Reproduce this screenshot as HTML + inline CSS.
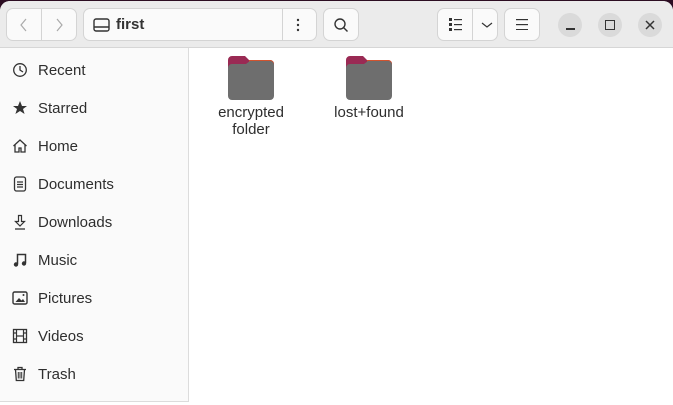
<!DOCTYPE html>
<html><head><meta charset="utf-8"><style>
*{margin:0;padding:0;box-sizing:border-box}
body{width:673px;height:405px;background:#2c0d22;font-family:"Liberation Sans","DejaVu Sans",sans-serif;position:relative;overflow:hidden}
.win{position:absolute;left:0;top:1px;width:673px;height:404px;background:#fff;border-radius:10px 10px 0 0;overflow:hidden}
.hdr{position:absolute;left:0;top:0;width:673px;height:47px;background:#ebebeb;border-bottom:1px solid #d6d6d6}
.btn{position:absolute;top:7px;height:33px;background:#fafafa;border:1px solid #d4d4d4;border-radius:7px}
.side{position:absolute;left:0;top:47px;width:189px;height:354px;background:#fafafa;border-right:1px solid #dcdcdc;border-bottom:1px solid #dcdcdc}
.item{position:absolute;left:12px;height:20px;font-size:15px;color:#2e2e2e;line-height:20px}
.item svg{position:absolute;left:0;top:2px}
.item span{position:absolute;left:26px;top:1px;white-space:nowrap}
.circ{position:absolute;top:12px;width:24px;height:24px;border-radius:50%;background:#dadada}
.lbl{position:absolute;font-size:15px;color:#2e2e2e;text-align:center;line-height:17px}
</style></head><body>
<div class="win">
<div class="hdr">
 <div class="btn" style="left:6px;width:71px"><div style="position:absolute;left:34px;top:0;width:1px;height:31px;background:#d4d4d4"></div>
  <svg style="position:absolute;left:12px;top:8px" width="10" height="16"><path d="M7 2L2 8l5 6" stroke="#aaa" fill="none" stroke-width="1.2"/></svg>
  <svg style="position:absolute;left:47px;top:8px" width="10" height="16"><path d="M3 2l5 6-5 6" stroke="#aaa" fill="none" stroke-width="1.2"/></svg></div>
 <div class="btn" style="left:83px;width:234px"><div style="position:absolute;left:198px;top:0;width:1px;height:31px;background:#d4d4d4"></div>
  <svg style="position:absolute;left:9px;top:9px" width="18" height="15"><rect x="1" y="1" width="15" height="12" rx="2" fill="none" stroke="#333" stroke-width="1.4"/><line x1="1" y1="9" x2="16" y2="9" stroke="#333" stroke-width="1.4"/></svg>
  <span style="position:absolute;left:32px;top:7px;font-size:15px;font-weight:bold;color:#333">first</span>
  <svg style="position:absolute;left:212px;top:9px" width="4" height="14"><circle cx="2" cy="2" r="1.2" fill="#333"/><circle cx="2" cy="7" r="1.2" fill="#333"/><circle cx="2" cy="12" r="1.2" fill="#333"/></svg></div>
 <div class="btn" style="left:323px;width:36px"><svg style="position:absolute;left:9px;top:8px" width="16" height="16"><circle cx="7" cy="7" r="5" fill="none" stroke="#333" stroke-width="1.4"/><line x1="10.5" y1="10.5" x2="14.5" y2="14.5" stroke="#333" stroke-width="1.4"/></svg></div>
 <div class="btn" style="left:437px;width:61px"><div style="position:absolute;left:34px;top:0;width:1px;height:31px;background:#d4d4d4"></div>
  <svg style="position:absolute;left:11px;top:9px" width="14" height="13"><g fill="#333"><rect x="0" y="0" width="3" height="3"/><rect x="0" y="5" width="3" height="3"/><rect x="0" y="10" width="3" height="3"/><rect x="5" y="1" width="8" height="1.2"/><rect x="5" y="6" width="8" height="1.2"/><rect x="5" y="11" width="8" height="1.2"/></g></svg>
  <svg style="position:absolute;left:43px;top:12px" width="12" height="8"><path d="M1 2l5 4 5-4" stroke="#333" fill="none" stroke-width="1.2"/></svg></div>
 <div class="btn" style="left:504px;width:36px"><svg style="position:absolute;left:11px;top:10px" width="13" height="11"><g fill="#333"><rect y="0" width="12" height="1.2"/><rect y="5" width="12" height="1.2"/><rect y="10" width="12" height="1.2"/></g></svg></div>
 <div class="circ" style="left:558px"><div style="position:absolute;left:8px;top:15px;width:9px;height:1.5px;background:#333"></div></div>
 <div class="circ" style="left:598px"><div style="position:absolute;left:7px;top:7px;width:10px;height:10px;border:1.4px solid #333"></div></div>
 <div class="circ" style="left:638px"><svg style="position:absolute;left:7px;top:7px" width="10" height="10"><path d="M1 1l8 8M9 1l-8 8" stroke="#333" stroke-width="1.5"/></svg></div>
</div>
<div class="side">
 <div class="item" style="top:12px"><svg width="16" height="16"><circle cx="8" cy="8" r="6.3" fill="none" stroke="#333" stroke-width="1.3"/><path d="M8 4v4l3 2" stroke="#333" fill="none" stroke-width="1.3"/></svg><span>Recent</span></div>
 <div class="item" style="top:50px"><svg width="16" height="16"><path d="M8 1l2 5h5l-4 3 1.6 5L8 11l-4.6 3L5 9 1 6h5z" fill="#333"/></svg><span>Starred</span></div>
 <div class="item" style="top:88px"><svg width="16" height="16"><path d="M1.5 8L8 2l6.5 6M3 7v7h4v-4h2v4h4V7" fill="none" stroke="#333" stroke-width="1.3"/></svg><span>Home</span></div>
 <div class="item" style="top:126px"><svg width="16" height="16"><rect x="2.5" y="1" width="11" height="14" rx="2" fill="none" stroke="#333" stroke-width="1.3"/><path d="M5 6h6M5 8.5h6M5 11h6" stroke="#333" stroke-width="1.2"/></svg><span>Documents</span></div>
 <div class="item" style="top:164px"><svg width="16" height="16"><path d="M6.5 1.5h3v6h3L8 12 3.5 7.5h3z" fill="none" stroke="#333" stroke-width="1.2"/><path d="M3 15h10" stroke="#333" stroke-width="1.3"/></svg><span>Downloads</span></div>
 <div class="item" style="top:202px"><svg width="16" height="16"><path d="M5.5 12V2.5h8V11" fill="none" stroke="#333" stroke-width="1.5"/><circle cx="4" cy="12.5" r="2.2" fill="#333"/><circle cx="12" cy="11.5" r="2.2" fill="#333"/></svg><span>Music</span></div>
 <div class="item" style="top:240px"><svg width="16" height="16"><rect x="1" y="2" width="14" height="12" rx="1.5" fill="none" stroke="#333" stroke-width="1.4"/><path d="M3.5 12l3.5-4 2.5 2.5 1.5-1.5 2 3z" fill="#333"/><circle cx="11.5" cy="5" r="1" fill="#333"/></svg><span>Pictures</span></div>
 <div class="item" style="top:278px"><svg width="16" height="16"><rect x="1.5" y="1.5" width="13" height="13" fill="none" stroke="#333" stroke-width="1.3"/><path d="M4.5 1.5v13M11.5 1.5v13M4.5 8h7M1.5 5h3M1.5 11h3M11.5 5h3M11.5 11h3" stroke="#333" stroke-width="1.2"/></svg><span>Videos</span></div>
 <div class="item" style="top:316px"><svg width="16" height="16"><path d="M2 3.5h12M6 3.5V1.5h4v2M3.5 3.5l.8 11h7.4l.8-11" fill="none" stroke="#333" stroke-width="1.3"/><path d="M6.3 6v6.5M8 6v6.5M9.7 6v6.5" stroke="#333" stroke-width="1"/></svg><span>Trash</span></div>
</div>
<svg style="position:absolute;left:228px;top:55px" width="46" height="44"><path d="M0 4a4 4 0 0 1 4-4h13l4 4h21a4 4 0 0 1 4 4v6H0z" fill="#9a2a54"/><path d="M21 4h21a4 4 0 0 1 4 4v6H21z" fill="#d2532e"/><path d="M0 12a4 4 0 0 1 4-4h14l4-3h20a4 4 0 0 1 4 4v31a4 4 0 0 1-4 4H4a4 4 0 0 1-4-4z" fill="#6e6e6e"/></svg>
<svg style="position:absolute;left:346px;top:55px" width="46" height="44"><path d="M0 4a4 4 0 0 1 4-4h13l4 4h21a4 4 0 0 1 4 4v6H0z" fill="#9a2a54"/><path d="M21 4h21a4 4 0 0 1 4 4v6H21z" fill="#d2532e"/><path d="M0 12a4 4 0 0 1 4-4h14l4-3h20a4 4 0 0 1 4 4v31a4 4 0 0 1-4 4H4a4 4 0 0 1-4-4z" fill="#6e6e6e"/></svg>
<div class="lbl" style="left:201px;top:103px;width:100px">encrypted<br>folder</div>
<div class="lbl" style="left:319px;top:103px;width:100px">lost+found</div>
</div>
</body></html>
